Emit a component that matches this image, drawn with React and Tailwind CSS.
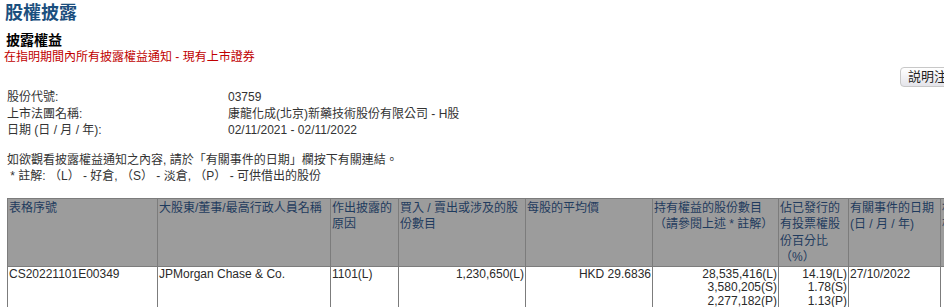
const FONT = "font-['Liberation_Sans','Noto_Sans_CJK_TC',sans-serif]";

const cols = [150, 173, 68, 127, 127, 126, 70, 92, 60];

const headers = [
  ["表格序號"],
  ["大股東/董事/最高行政人員名稱"],
  ["作出披露的", "原因"],
  ["買入 / 賣出或涉及的股", "份數目"],
  ["每股的平均價"],
  ["持有權益的股份數目", "（請參閱上述 * 註解）"],
  ["佔已發行的", "有投票權股", "份百分比", "（%）"],
  ["有關事件的日期", "(日 / 月 / 年)"],
  ["相關", "權"],
];

function Info({ label, value }) {
  return (
    <div className="flex leading-[16.5px]">
      <div className="w-[221px]">{label}</div>
      <div>{value}</div>
    </div>
  );
}

export default function App() {
  return (
    <div className={`w-[944px] h-[307px] overflow-hidden bg-white text-[12px] text-[#333] ${FONT}`}>
      <div className="pl-[5px] pt-[1px] text-[18px] font-bold leading-[25px] text-[#1b4f7e]">股權披露</div>
      <div className="pl-[6px] mt-[5px] text-[14px] font-bold leading-[18px] text-black">披露權益</div>
      <div className="pl-[4px] mt-[1px] text-[12px] leading-[15px] text-[#c00000]">在指明期間內所有披露權益通知 - 現有上市證券</div>

      <div className="flex justify-end mt-[2px] h-[20px]">
        <button className="ml-auto mr-[-24px] h-[20px] px-[7px] rounded-[4px] border border-[#c8c8c8] bg-gradient-to-b from-white to-[#e4e4ea] text-[13px] leading-[18px] text-[#222]">
          説明注釋
        </button>
      </div>

      <div className="pl-[7px] mt-[2px]">
        <Info label="股份代號:" value="03759" />
        <Info label="上市法團名稱:" value="康龍化成(北京)新藥技術股份有限公司 - H股" />
        <Info label="日期 (日 / 月 / 年):" value="02/11/2021 - 02/11/2022" />
      </div>

      <div className="pl-[7px] mt-[13px] leading-[16px]">
        <div>如欲觀看披露權益通知之內容, 請於「有關事件的日期」欄按下有關連結。</div>
        <div>&nbsp;* 註解: （L） - 好倉, （S） - 淡倉, （P） - 可供借出的股份</div>
      </div>

      <table className="ml-[7px] mt-[14px] border-collapse table-fixed w-[943px]">
        <colgroup>
          {cols.map((w, i) => (
            <col key={i} style={{ width: w }} />
          ))}
        </colgroup>
        <thead>
          <tr className="h-[65px] bg-[#9c9c9c]">
            {headers.map((lines, i) => (
              <th
                key={i}
                className="border border-[#7c7c7c] align-top text-left font-normal px-[1px] pt-[1px] leading-[16.5px] text-[#1f3b5e] whitespace-nowrap overflow-hidden"
              >
                {lines.map((l, j) => (
                  <div key={j}>{l}</div>
                ))}
              </th>
            ))}
          </tr>
        </thead>
        <tbody>
          <tr className="h-[43px] text-[#2a2a2a] leading-[13.8px]">
            <td className="border border-[#7c7c7c] align-top px-[1px] pt-[1px]">CS20221101E00349</td>
            <td className="border border-[#7c7c7c] align-top px-[1px] pt-[1px]">JPMorgan Chase &amp; Co.</td>
            <td className="border border-[#7c7c7c] align-top px-[1px] pt-[1px]">1101(L)</td>
            <td className="border border-[#7c7c7c] align-top px-[1px] pt-[1px] text-right">1,230,650(L)</td>
            <td className="border border-[#7c7c7c] align-top px-[1px] pt-[1px] text-right">HKD 29.6836</td>
            <td className="border border-[#7c7c7c] align-top px-[1px] pt-[1px] text-right">
              <div>28,535,416(L)</div>
              <div>3,580,205(S)</div>
              <div>2,277,182(P)</div>
            </td>
            <td className="border border-[#7c7c7c] align-top px-[1px] pt-[1px] text-right">
              <div>14.19(L)</div>
              <div>1.78(S)</div>
              <div>1.13(P)</div>
            </td>
            <td className="border border-[#7c7c7c] align-top px-[1px] pt-[1px]">27/10/2022</td>
            <td className="border border-[#7c7c7c] align-top px-[1px] pt-[1px]"></td>
          </tr>
        </tbody>
      </table>
    </div>
  );
}
